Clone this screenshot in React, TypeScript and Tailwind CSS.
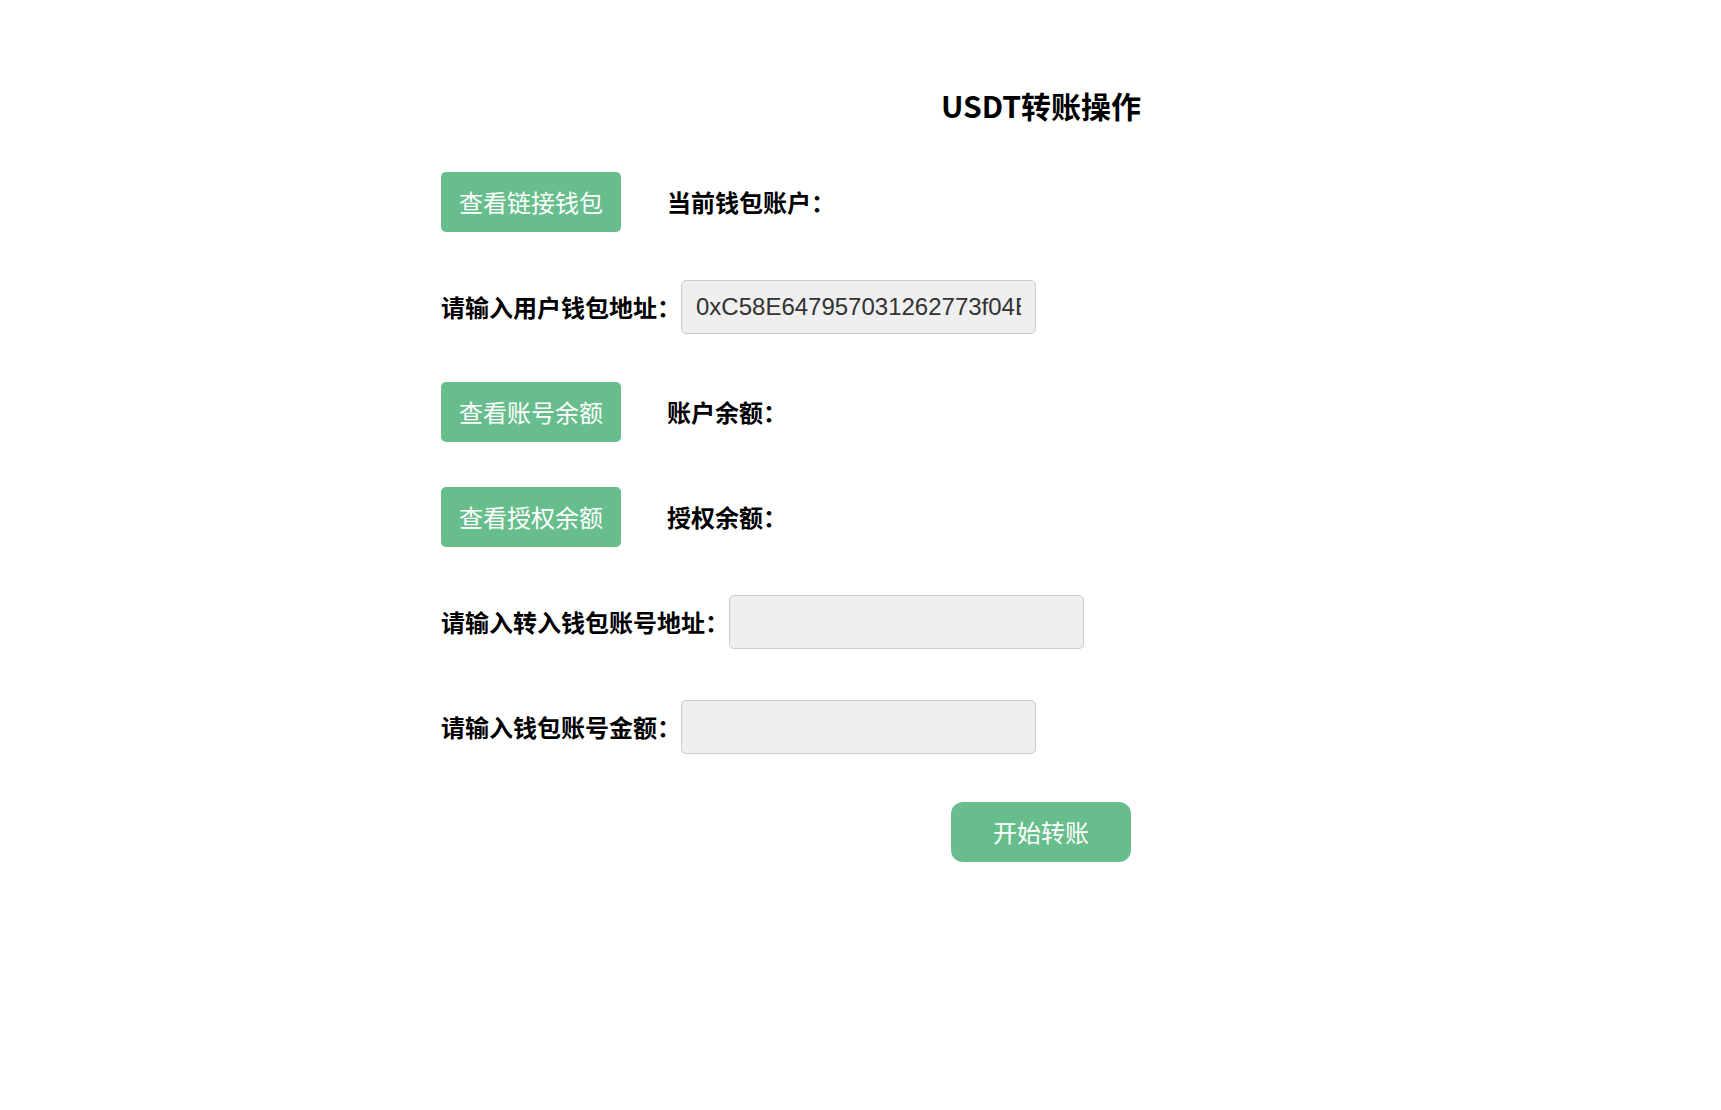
import React from 'react'

function GreenButton({ children }: { children: React.ReactNode }) {
  return (
    <button className="h-[60px] w-[180px] shrink-0 rounded-[5px] bg-[#67be8c] font-['Noto_Sans_CJK_SC',sans-serif] text-[24px] text-white">
      {children}
    </button>
  )
}

function Field({ label, value }: { label: string, value?: string }) {
  return (
    <div className="flex h-[60px] items-center">
      <span className="font-['Noto_Sans_CJK_SC',sans-serif] text-[24px] font-bold text-black">{label}</span>
      <input
        type="text"
        defaultValue={value}
        className="h-[54px] w-[355px] rounded-[5px] border border-[#cccccc] bg-[#efefef] px-[14px] font-['Liberation_Sans',Arial,sans-serif] text-[24px] text-[#333] outline-none"
      />
    </div>
  )
}

function InfoRow({ button, label }: { button: string, label: string }) {
  return (
    <div className="flex h-[60px] items-center gap-[46px]">
      <GreenButton>{button}</GreenButton>
      <span className="font-['Noto_Sans_CJK_SC',sans-serif] text-[24px] font-bold text-black">{label}</span>
    </div>
  )
}

export default function App() {
  return (
    <div className="min-h-[1110px] bg-white">
      <div className="ml-[441px] flex w-[1200px] flex-col gap-[45px] pt-[85px]">
        <h1 className="mb-[2px] text-center font-['Noto_Sans_CJK_SC',sans-serif] text-[30px] font-bold leading-[40px] text-black">
          USDT转账操作
        </h1>

        <InfoRow button="查看链接钱包" label="当前钱包账户：" />

        <Field label="请输入用户钱包地址：" value="0xC58E647957031262773f04B8c1D2e3F4a5b6C7d8" />

        <InfoRow button="查看账号余额" label="账户余额：" />
        <InfoRow button="查看授权余额" label="授权余额：" />

        <Field label="请输入转入钱包账号地址：" />
        <Field label="请输入钱包账号金额：" />

        <div className="flex h-[60px] justify-center">
          <button className="h-[60px] w-[180px] rounded-[12px] bg-[#67be8c] font-['Noto_Sans_CJK_SC',sans-serif] text-[24px] text-white">
            开始转账
          </button>
        </div>
      </div>
    </div>
  )
}
